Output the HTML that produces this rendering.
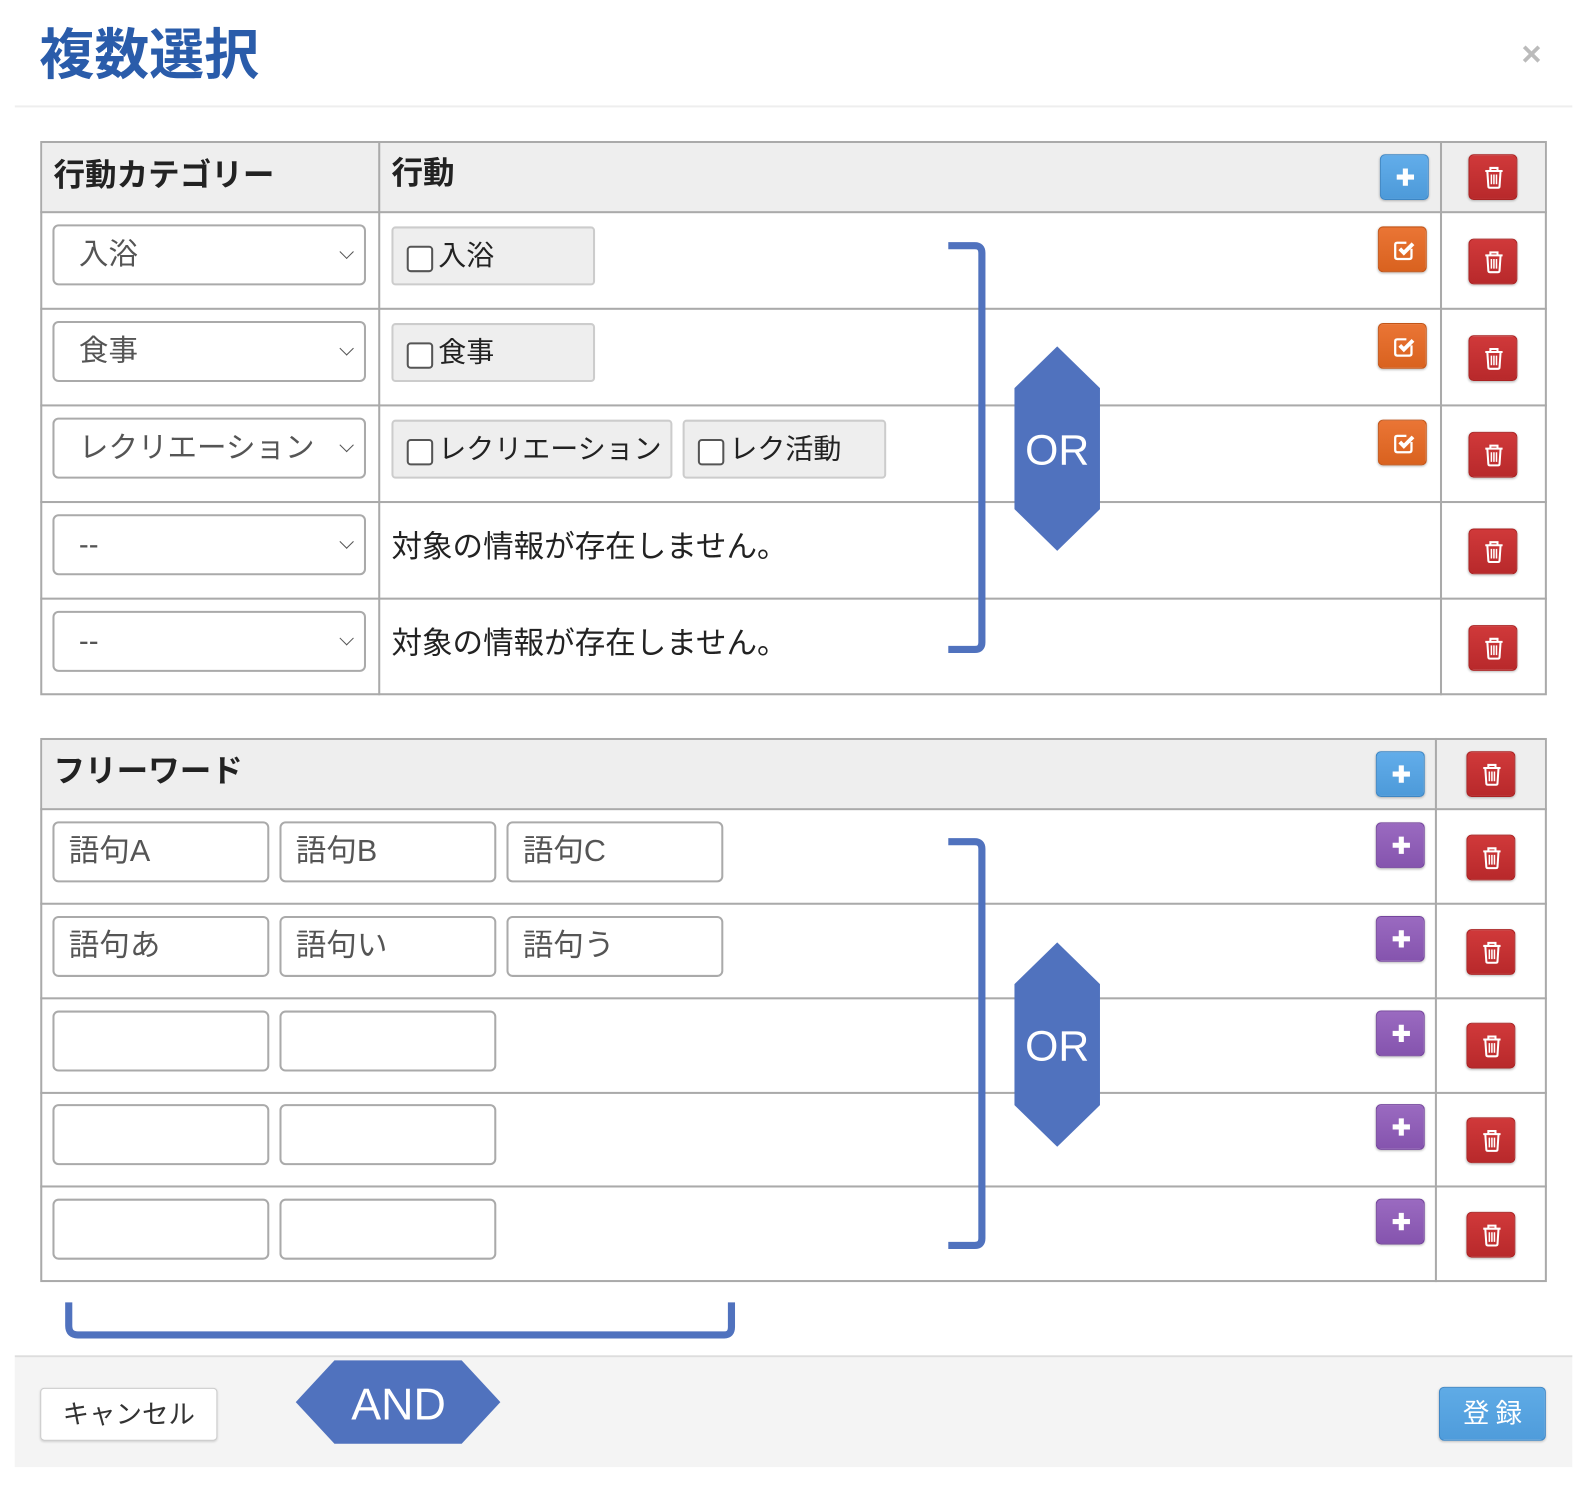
<!DOCTYPE html>
<html><head><meta charset="utf-8"><style>
html,body{margin:0;padding:0;background:#fff;width:1596px;height:1498px;overflow:hidden}
body{font-family:"Liberation Sans","Noto Sans CJK JP",sans-serif}
#w{position:absolute;left:0;top:0;width:1570px;height:1475px;transform-origin:0 0;transform:matrix(1.018,0,0,1.017,-1.5,0.65)}
.a{position:absolute;box-sizing:border-box}
.t{color:#222;font-size:30px;line-height:1}
.sel{border:2px solid #aaa;border-radius:6px;background:#fff;height:60px;width:308px;left:53px;color:#555;font-size:29px;padding-left:24px;line-height:56px}
.sel:after{content:"";position:absolute;right:12px;top:20px;width:9px;height:9px;border-right:1.5px solid #555;border-bottom:1.5px solid #555;transform:rotate(45deg)}
.cb{background:#eee;border:2px solid #ccc;border-radius:4px;height:58px;color:#222;font-size:27.5px;line-height:54px;padding-left:44px}
.cb:before{content:"";position:absolute;left:13px;top:17px;width:26px;height:26px;border:2px solid #555;border-radius:4px;background:#fff;box-sizing:border-box}
.inp{border:2px solid #aaa;border-radius:6px;background:#fff;height:60px;width:213px;color:#555;font-size:30px;line-height:56px;padding-left:14px}
.btn{width:48px;height:45px;border-radius:5px;box-shadow:0 1px 2px rgba(0,0,0,.25)}
.red{background:linear-gradient(#d0393a,#b8292b);border:1px solid #a22}
.blue{background:linear-gradient(#62adea,#4d9ad9);border:1px solid #3d86c4}
.org{background:linear-gradient(#ea7535,#d9621f);border:1px solid #c15518}
.pur{background:linear-gradient(#9a6ac0,#8554ae);border:1px solid #74459c}
.btn svg{position:absolute;left:0;top:0}
.line{background:#aaa}
</style></head><body><div id="w">
<div class="a" style="left:40px;top:22px;font-size:54px;font-weight:bold;color:#2a5caa;line-height:64px">複数選択</div>
<div class="a" style="left:1496px;top:36px;font-size:34px;color:#bbb;font-weight:bold;line-height:34px">×</div>
<div class="a" style="left:16px;top:103px;width:1530px;height:2px;background:#eee"></div>

<div class="a" style="left:41px;top:138px;width:1480px;height:545px;border:2px solid #aaa"></div>
<div class="a" style="left:43px;top:140px;width:1476px;height:68px;background:#eee"></div>
<div class="a line" style="left:373px;top:138px;width:2px;height:545px"></div>
<div class="a line" style="left:1416px;top:138px;width:2px;height:545px"></div>
<div class="a line" style="left:41px;top:207px;width:1480px;height:2px"></div>
<div class="a line" style="left:41px;top:302px;width:1480px;height:2px"></div>
<div class="a line" style="left:41px;top:397px;width:1480px;height:2px"></div>
<div class="a line" style="left:41px;top:492px;width:1480px;height:2px"></div>
<div class="a line" style="left:41px;top:587px;width:1480px;height:2px"></div>
<div class="a t" style="left:54px;top:156px;font-weight:bold;font-size:31px">行動カテゴリー</div>
<div class="a t" style="left:386px;top:154px;font-weight:bold;font-size:31px">行動</div>

<div class="a sel" style="top:220px">入浴</div>
<div class="a sel" style="top:315px">食事</div>
<div class="a sel" style="top:410px">レクリエーション</div>
<div class="a sel" style="top:505px">--</div>
<div class="a sel" style="top:600px">--</div>
<div class="a cb" style="left:386px;top:222px;width:200px">入浴</div>
<div class="a cb" style="left:386px;top:317px;width:200px">食事</div>
<div class="a cb" style="left:386px;top:412px;width:276px">レクリエーション</div>
<div class="a cb" style="left:672px;top:412px;width:200px">レク活動</div>
<div class="a t" style="left:386px;top:523px">対象の情報が存在しません。</div>
<div class="a t" style="left:386px;top:618px">対象の情報が存在しません。</div>

<div class="a" style="left:41px;top:725px;width:1480px;height:535px;border:2px solid #aaa"></div>
<div class="a" style="left:43px;top:727px;width:1476px;height:67px;background:#eee"></div>
<div class="a line" style="left:1411px;top:725px;width:2px;height:535px"></div>
<div class="a line" style="left:41px;top:794px;width:1480px;height:2px"></div>
<div class="a line" style="left:41px;top:887px;width:1480px;height:2px"></div>
<div class="a line" style="left:41px;top:980px;width:1480px;height:2px"></div>
<div class="a line" style="left:41px;top:1073px;width:1480px;height:2px"></div>
<div class="a line" style="left:41px;top:1165px;width:1480px;height:2px"></div>
<div class="a t" style="left:54px;top:742px;font-weight:bold;font-size:31px">フリーワード</div>
<div class="a inp" style="left:53px;top:807px">語句A</div>
<div class="a inp" style="left:276px;top:807px">語句B</div>
<div class="a inp" style="left:499px;top:807px">語句C</div>
<div class="a inp" style="left:53px;top:900px">語句あ</div>
<div class="a inp" style="left:276px;top:900px">語句い</div>
<div class="a inp" style="left:499px;top:900px">語句う</div>
<div class="a inp" style="left:53px;top:993px"></div>
<div class="a inp" style="left:276px;top:993px"></div>
<div class="a inp" style="left:53px;top:1085px"></div>
<div class="a inp" style="left:276px;top:1085px"></div>
<div class="a inp" style="left:53px;top:1178px"></div>
<div class="a inp" style="left:276px;top:1178px"></div>

<svg width="0" height="0" style="position:absolute"><defs>
<symbol id="tr" viewBox="0 0 48 45"><g fill="none" stroke="#fff" stroke-width="2"><path d="M15.5 15.5h17M20.5 15.5v-3h7v3"/><path d="M17.5 15.5l1 15q0 1.5 1.5 1.5h8q1.5 0 1.5-1.5l1-15"/><path d="M21.5 19v9.5M24 19v9.5M26.5 19v9.5" stroke-width="1.5"/></g></symbol>
<symbol id="pl" viewBox="0 0 48 45"><path d="M24 13v17M15.5 21.5h17" stroke="#fff" stroke-width="5"/></symbol>
<symbol id="ck" viewBox="0 0 48 45"><g fill="none" stroke="#fff" stroke-width="2.2"><path d="M32 21v8q0 2-2 2H18q-2 0-2-2V17q0-2 2-2h9"/><path d="M20.5 21l4 4 9-9" stroke-width="3.8"/></g></symbol>
</defs></svg>
<div class="a btn blue" style="left:1357px;top:151px"><svg width="48" height="45"><use href="#pl"/></svg></div>
<div class="a btn red" style="left:1444px;top:151px"><svg width="48" height="45"><use href="#tr"/></svg></div>
<div class="a btn org" style="left:1355px;top:222px"><svg width="48" height="45"><use href="#ck"/></svg></div>
<div class="a btn org" style="left:1355px;top:317px"><svg width="48" height="45"><use href="#ck"/></svg></div>
<div class="a btn org" style="left:1355px;top:412px"><svg width="48" height="45"><use href="#ck"/></svg></div>
<div class="a btn red" style="left:1444px;top:234px"><svg width="48" height="45"><use href="#tr"/></svg></div>
<div class="a btn red" style="left:1444px;top:329px"><svg width="48" height="45"><use href="#tr"/></svg></div>
<div class="a btn red" style="left:1444px;top:424px"><svg width="48" height="45"><use href="#tr"/></svg></div>
<div class="a btn red" style="left:1444px;top:519px"><svg width="48" height="45"><use href="#tr"/></svg></div>
<div class="a btn red" style="left:1444px;top:614px"><svg width="48" height="45"><use href="#tr"/></svg></div>

<div class="a btn blue" style="left:1353px;top:738px"><svg width="48" height="45"><use href="#pl"/></svg></div>
<div class="a btn red" style="left:1442px;top:738px"><svg width="48" height="45"><use href="#tr"/></svg></div>
<div class="a btn pur" style="left:1353px;top:808px"><svg width="48" height="45"><use href="#pl"/></svg></div>
<div class="a btn pur" style="left:1353px;top:900px"><svg width="48" height="45"><use href="#pl"/></svg></div>
<div class="a btn pur" style="left:1353px;top:993px"><svg width="48" height="45"><use href="#pl"/></svg></div>
<div class="a btn pur" style="left:1353px;top:1085px"><svg width="48" height="45"><use href="#pl"/></svg></div>
<div class="a btn pur" style="left:1353px;top:1178px"><svg width="48" height="45"><use href="#pl"/></svg></div>
<div class="a btn red" style="left:1442px;top:820px"><svg width="48" height="45"><use href="#tr"/></svg></div>
<div class="a btn red" style="left:1442px;top:913px"><svg width="48" height="45"><use href="#tr"/></svg></div>
<div class="a btn red" style="left:1442px;top:1005px"><svg width="48" height="45"><use href="#tr"/></svg></div>
<div class="a btn red" style="left:1442px;top:1098px"><svg width="48" height="45"><use href="#tr"/></svg></div>
<div class="a btn red" style="left:1442px;top:1191px"><svg width="48" height="45"><use href="#tr"/></svg></div>

<svg class="a" style="left:0;top:0" width="1570" height="1475">
<g fill="none" stroke="#5072be" stroke-width="7">
<path d="M933 241h26q7 0 7 7v383q0 7-7 7h-26"/>
<path d="M933 827h26q7 0 7 7v383q0 7-7 7h-26"/>
<path d="M69 1280v23q0 9 9 9h635q7 0 7-8v-24"/>
</g>
<g fill="#5072be">
<polygon points="1040,340 1082,381 1082,500 1040,541 998,500 998,381"/>
<polygon points="1040,926 1082,967 1082,1086 1040,1127 998,1086 998,967"/>
</g>
<g fill="#fff" font-family="Liberation Sans, sans-serif" font-size="42" text-anchor="middle">
<text x="1040" y="456">OR</text>
<text x="1040" y="1042">OR</text>
</g>
</svg>

<div class="a" style="left:16px;top:1332px;width:1530px;height:2px;background:#ddd"></div>
<div class="a" style="left:16px;top:1334px;width:1530px;height:108px;background:#f4f4f4"></div>
<div class="a" style="left:41px;top:1364px;width:174px;height:52px;background:#fff;border:1px solid #ccc;border-radius:4px;box-shadow:0 1px 2px rgba(0,0,0,.15);font-size:26px;color:#333;text-align:center;line-height:50px">キャンセル</div>
<svg class="a" style="left:0;top:0" width="1570" height="1475">
<polygon points="330,1337 455,1337 493,1378 455,1419 330,1419 292,1378" fill="#5072be"/>
<text x="393" y="1395" fill="#fff" font-family="Liberation Sans, sans-serif" font-size="44" text-anchor="middle">AND</text>
</svg>
<div class="a" style="left:1415px;top:1363px;width:105px;height:53px;background:linear-gradient(#5fabe6,#4f9cdb);border:1px solid #3f87c6;border-radius:5px;box-shadow:0 1px 2px rgba(0,0,0,.2);color:#fff;font-size:26px;text-align:center;line-height:50px;letter-spacing:6px;padding-left:6px">登録</div>
</div></body></html>
